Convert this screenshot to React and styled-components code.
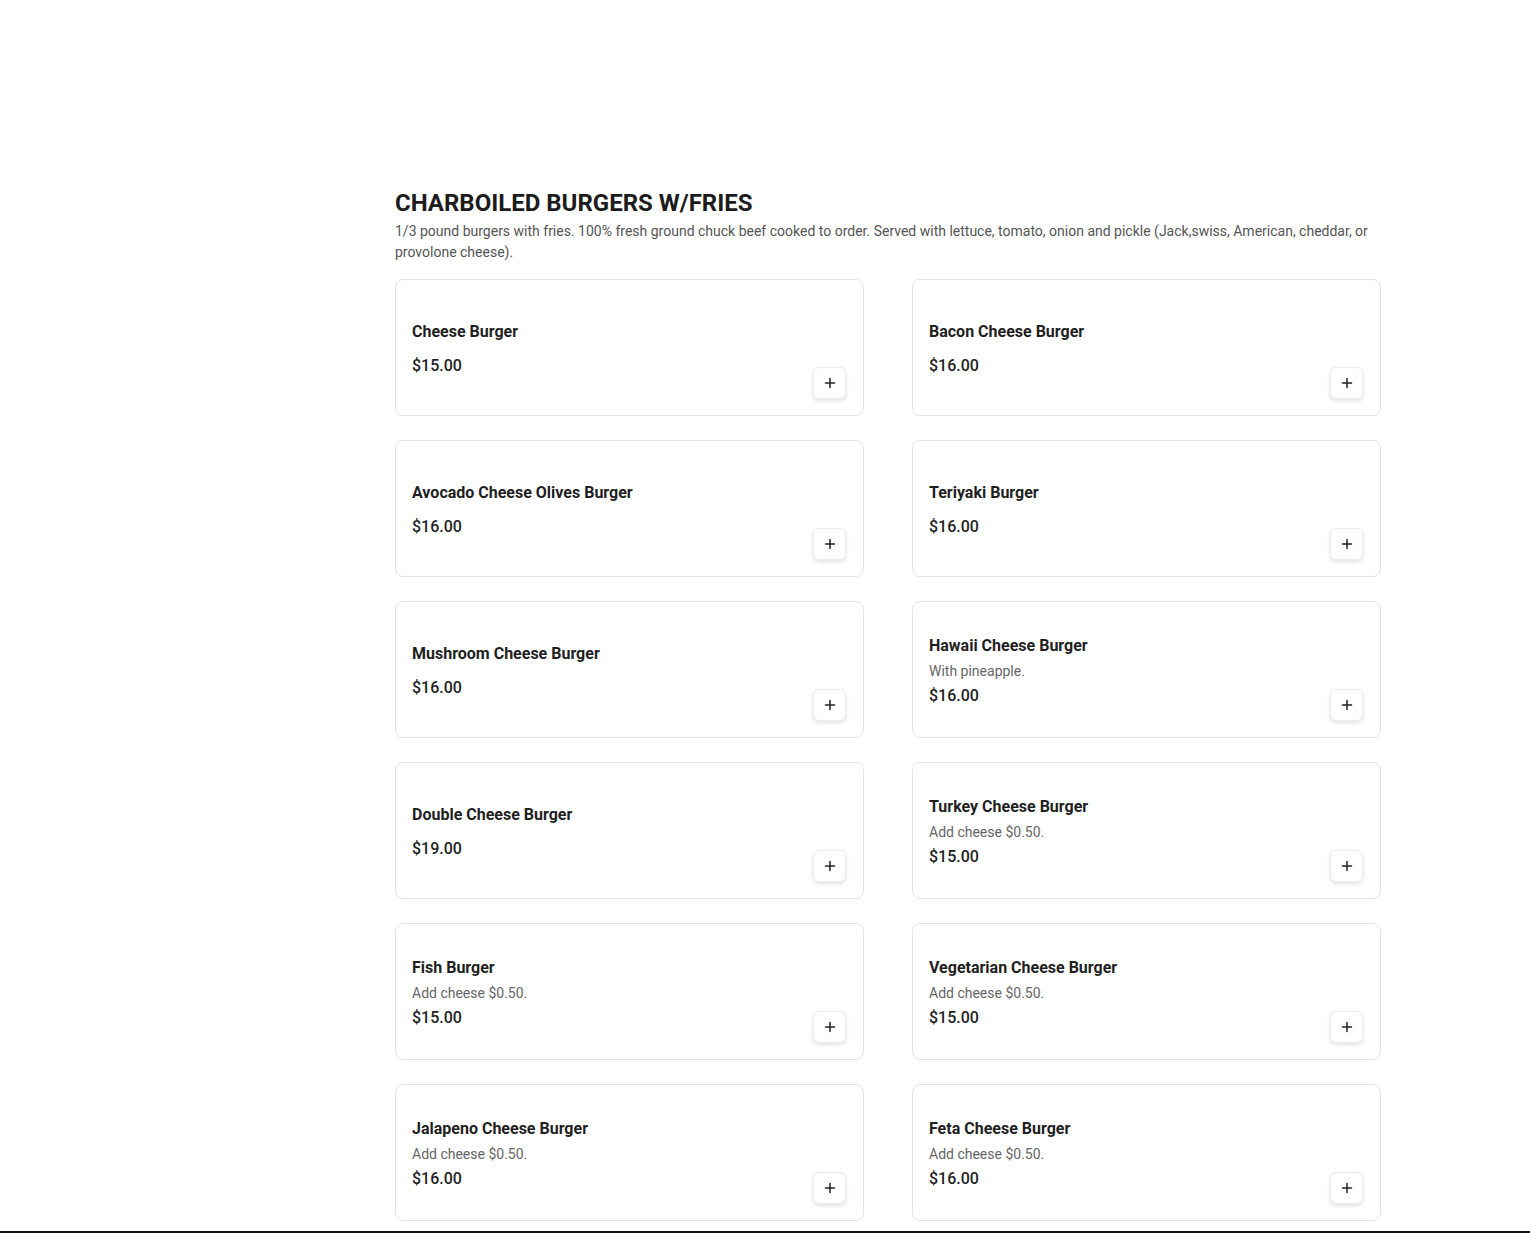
import React from 'react'
import styled, { createGlobalStyle } from 'styled-components'

const GlobalStyle = createGlobalStyle`
  body {
    margin: 0;
    background: #fff;
    font-family: Roboto, 'Liberation Sans', Arial, sans-serif;
    color: #1f1f1f;
  }
`

const Page = styled.div`
  display: grid;
  grid-template-columns: 395px 986px;
  padding-top: 189px;
`

const Main = styled.main`
  grid-column: 2;
`

const Heading = styled.h2`
  margin: 0;
  font-size: 24px;
  line-height: 28px;
  font-weight: 700;
  color: #1c1c1c;
`

const Intro = styled.p`
  margin: 4px 0 16px 0;
  font-size: 14px;
  line-height: 21px;
  color: #555;
`

const Grid = styled.div`
  display: grid;
  grid-template-columns: 1fr 1fr;
  column-gap: 48px;
  row-gap: 24px;
`

const Card = styled.div`
  height: 137px;
  box-sizing: border-box;
  border: 1px solid #e4e4e4;
  border-radius: 8px;
  padding: 16px 17px 16px 16px;
  display: flex;
  justify-content: space-between;
  background: #fff;
`

const Info = styled.div`
  display: flex;
  flex-direction: column;
  justify-content: center;
  padding-top: 2px;
`

const Name = styled.div`
  font-size: 16px;
  line-height: 24px;
  font-weight: 700;
  color: #1f1f1f;
`

const Desc = styled.div`
  margin-top: 3px;
  font-size: 14px;
  line-height: 20px;
  color: #666;
`

const Price = styled.div`
  margin-top: ${p => (p.$tight ? '3px' : '10px')};
  font-size: 16px;
  line-height: 24px;
  font-weight: 500;
  color: #1f1f1f;
`

const AddButton = styled.button`
  align-self: flex-end;
  width: 33px;
  height: 32px;
  padding: 0;
  border: 1px solid #ececec;
  border-radius: 6px;
  background: #fff;
  box-shadow: 0 2px 4px rgba(0, 0, 0, 0.12);
  display: flex;
  align-items: center;
  justify-content: center;
  cursor: pointer;
`

const BottomBar = styled.div`
  position: fixed;
  left: 0;
  right: 0;
  bottom: 0;
  height: 2px;
  background: #111;
`

const items = [
  { name: 'Cheese Burger', price: '$15.00' },
  { name: 'Bacon Cheese Burger', price: '$16.00' },
  { name: 'Avocado Cheese Olives Burger', price: '$16.00' },
  { name: 'Teriyaki Burger', price: '$16.00' },
  { name: 'Mushroom Cheese Burger', price: '$16.00' },
  { name: 'Hawaii Cheese Burger', desc: 'With pineapple.', price: '$16.00' },
  { name: 'Double Cheese Burger', price: '$19.00' },
  { name: 'Turkey Cheese Burger', desc: 'Add cheese $0.50.', price: '$15.00' },
  { name: 'Fish Burger', desc: 'Add cheese $0.50.', price: '$15.00' },
  { name: 'Vegetarian Cheese Burger', desc: 'Add cheese $0.50.', price: '$15.00' },
  { name: 'Jalapeno Cheese Burger', desc: 'Add cheese $0.50.', price: '$16.00' },
  { name: 'Feta Cheese Burger', desc: 'Add cheese $0.50.', price: '$16.00' }
]

const Plus = () => (
  <svg width="12" height="12" viewBox="0 0 12 12" fill="none">
    <path d="M6 1.5v9M1.5 6h9" stroke="#222" strokeWidth="1.5" strokeLinecap="round" />
  </svg>
)

export default function App() {
  return (
    <>
      <GlobalStyle />
      <Page>
        <Main>
          <Heading>CHARBOILED BURGERS W/FRIES</Heading>
          <Intro>
            1/3 pound burgers with fries. 100% fresh ground chuck beef cooked to order. Served with
            lettuce, tomato, onion and pickle (Jack,swiss, American, cheddar, or provolone cheese).
          </Intro>
          <Grid>
            {items.map(item => (
              <Card key={item.name}>
                <Info>
                  <Name>{item.name}</Name>
                  {item.desc && <Desc>{item.desc}</Desc>}
                  <Price $tight={!!item.desc}>{item.price}</Price>
                </Info>
                <AddButton aria-label={`Add ${item.name}`}>
                  <Plus />
                </AddButton>
              </Card>
            ))}
          </Grid>
        </Main>
      </Page>
      <BottomBar />
    </>
  )
}
